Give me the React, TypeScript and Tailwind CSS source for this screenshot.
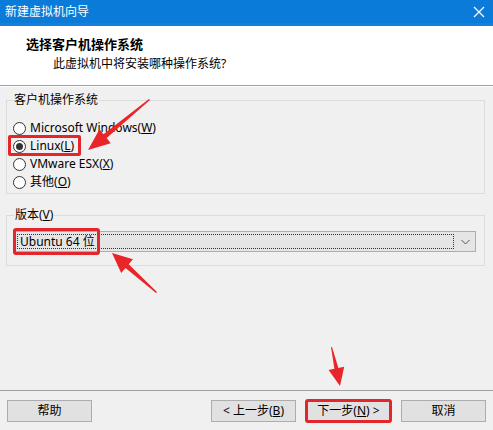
import React from "react";

const font = {
  fontFamily: '"Segoe UI", "Noto Sans", "Noto Sans CJK SC", sans-serif',
};

function Radio({ checked, label, m, rest }: { checked?: boolean; label: string; m: string; rest?: string }) {
  return (
    <div className="flex items-center h-[18px]">
      <span className="w-[13px] h-[13px] rounded-full border border-[#333] bg-white flex items-center justify-center">
        {checked && <span className="w-[7px] h-[7px] rounded-full bg-[#333]" />}
      </span>
      <span className="ml-[4px] text-[12px] text-[#000] leading-none">
        {label}(<span className="underline">{m}</span>){rest}
      </span>
    </div>
  );
}

function Btn({ children, cls = "" }: { children: React.ReactNode; cls?: string }) {
  return (
    <div
      className={
        "h-[22px] w-[85px] border border-[#adadad] bg-[#e1e1e1] flex items-center justify-center text-[12px] text-black " +
        cls
      }
    >
      {children}
    </div>
  );
}

export default function App() {
  return (
    <div className="relative w-[493px] h-[430px] bg-[#f0f0f0] overflow-hidden flex flex-col" style={font}>
      {/* Title bar */}
      <div className="h-[26px] bg-[#0a7bd9] border-b-[3px] border-[#1580dc] flex items-center justify-between pl-[5px] pr-[6px]">
        <span className="text-white text-[12px] leading-none">新建虚拟机向导</span>
        <svg width="14" height="14" viewBox="0 0 14 14" className="mr-[1px]">
          <path d="M2 2 L12 12 M12 2 L2 12" stroke="white" strokeWidth="1.3" />
        </svg>
      </div>
      {/* Header */}
      <div className="h-[60px] bg-white border-b border-[#a0a0a0] pt-[10px]">
        <div className="pl-[26px] text-[13px] font-bold leading-[16px] text-black">选择客户机操作系统</div>
        <div className="pl-[53px] mt-[4px] text-[12px] leading-[16px] text-black">此虚拟机中将安装哪种操作系统?</div>
      </div>
      <div className="h-px bg-white" />

      {/* Body */}
      <div className="flex-1 flex flex-col px-[6px] pr-[8px]">
        {/* Group 1 */}
        <div className="mt-[13px] relative border border-[#dcdcdc] h-[94px]">
          <span className="absolute -top-[8px] left-[6px] px-[1px] bg-[#f0f0f0] text-[12px] leading-[14px] text-black">
            客户机操作系统
          </span>
          <div className="pt-[18px] pl-[6px] flex flex-col">
            <Radio label="Microsoft Windows" m="W" />
            <Radio label="Linux" m="L" checked />
            <Radio label="VMware ESX" m="X" />
            <Radio label="其他" m="O" />
          </div>
        </div>

        {/* Group 2 */}
        <div className="mt-[21px] relative border border-[#dcdcdc] h-[51px]">
          <span className="absolute -top-[8px] left-[7px] px-[1px] bg-[#f0f0f0] text-[12px] leading-[14px] text-black">
            版本(<span className="underline">V</span>)
          </span>
          <div className="mt-[15px] ml-[7px] mr-[8px] h-[21px] border border-[#adadad] bg-[#e5e5e5] flex">
            <div className="flex-1 m-[2px] border border-dotted border-[#333] flex items-center pl-[2px] text-[12px] text-black">
              Ubuntu 64 位
            </div>
            <div className="w-[19px] flex items-center justify-center">
              <svg width="9" height="6" viewBox="0 0 9 6">
                <path d="M0.5 1 L4.5 5 L8.5 1" fill="none" stroke="#555" strokeWidth="1" />
              </svg>
            </div>
          </div>
        </div>
      </div>

      {/* Footer */}
      <div className="border-t border-[#a0a0a0] h-[40px] flex items-start pt-[9px] px-[7px]">
        <Btn>帮助</Btn>
        <div className="flex-1" />
        <Btn>
          &lt; 上一步(<span className="underline">B</span>)
        </Btn>
        <Btn cls="ml-[10px]">
          下一步(<span className="underline">N</span>) &gt;
        </Btn>
        <Btn cls="ml-[10px]">取消</Btn>
      </div>

      {/* Red annotations */}
      <div className="absolute left-[8px] top-[135px] w-[73px] h-[21px] border-[3px] border-[#e3262b] rounded-[2px]" />
      <div className="absolute left-[13px] top-[228px] w-[87px] h-[27px] border-[3px] border-[#e3262b] rounded-[3px]" />
      <div className="absolute left-[305px] top-[399px] w-[87px] h-[24px] border-[3px] border-[#e3262b] rounded-[3px]" />
      <svg className="absolute left-0 top-0" width="493" height="430" viewBox="0 0 493 430">
        <polygon
          fill="#e8262a"
          points="150,100 106.7,138.1 110.7,143.2 88,150 99.5,129.2 103.5,134.3 149,99"
        />
        <polygon
          fill="#e8262a"
          points="157,292 128.7,264.2 133,259.3 112,253 121.2,272.9 125.5,268 156,293"
        />
        <polygon
          fill="#e8262a"
          points="332,347 338.4,368 344.2,366.8 340,386 328.6,370 334.4,368.8 331,347"
        />
      </svg>
    </div>
  );
}
